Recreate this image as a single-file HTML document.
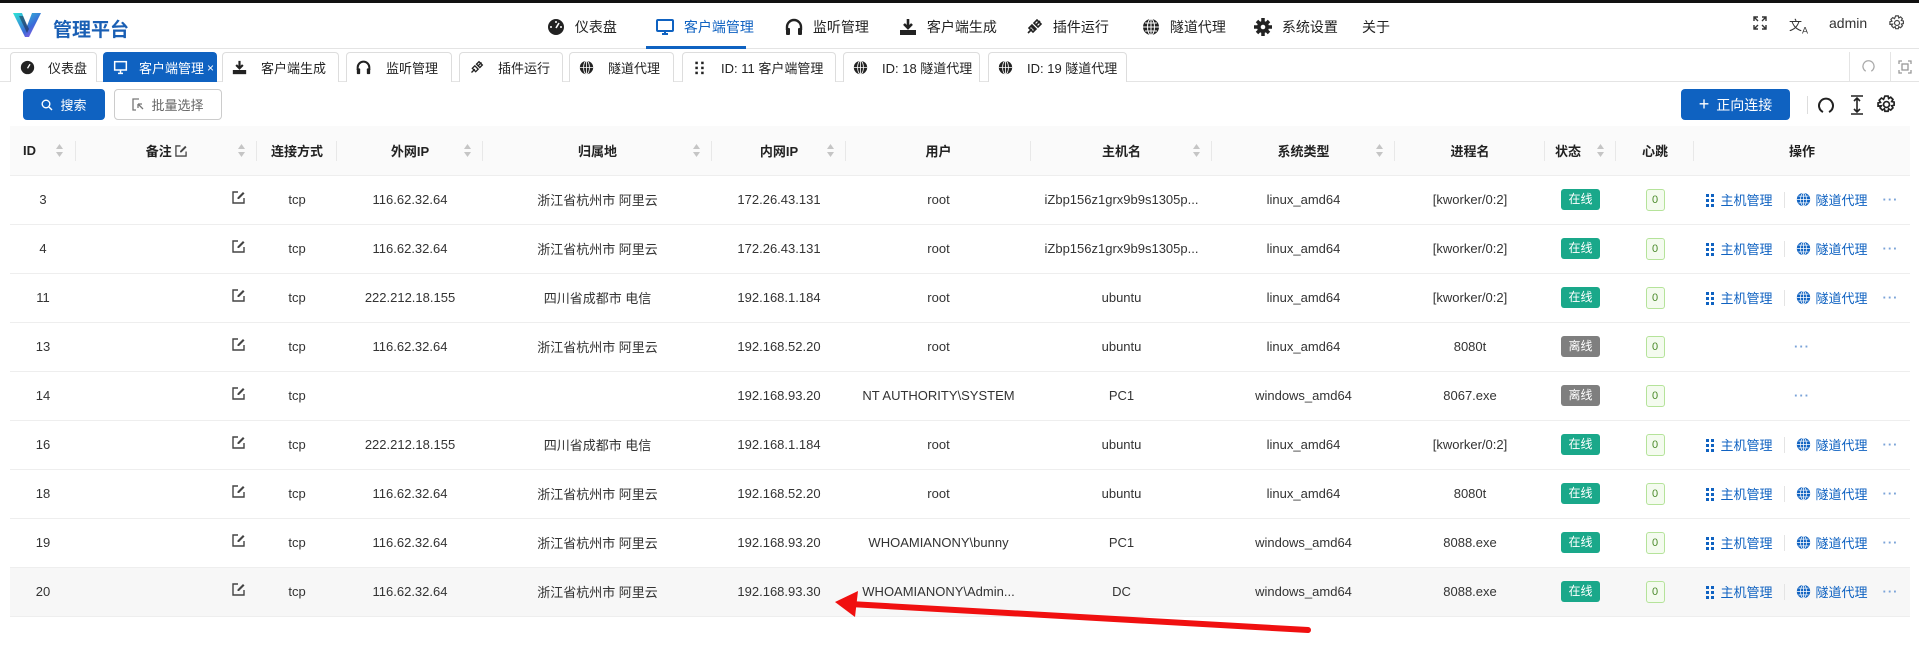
<!DOCTYPE html>
<html><head><meta charset="utf-8"><style>
*{box-sizing:border-box;margin:0;padding:0}
body{width:1919px;height:649px;overflow:hidden;background:#fff;font-family:"Liberation Sans","Noto Sans CJK SC",sans-serif;color:#333;position:relative;font-size:13px}
.abs{position:absolute}
.top{position:absolute;left:0;top:0;width:1919px;height:3px;background:#111}
.hdr{position:absolute;left:0;top:3px;width:1919px;height:46px;border-bottom:1px solid #e4e4e4}
.nav{position:absolute;top:14px;font-size:14px;color:#222;display:flex;align-items:center;gap:6px;white-space:nowrap}
.nav svg{width:18px;height:18px}
.tabs{position:absolute;left:0;top:50px;width:1919px;height:32px;border-bottom:1px solid #e4e4e4}
.tab{position:absolute;top:2px;height:30px;border:1px solid #ddd;border-bottom:none;border-radius:4px 4px 0 0;background:#fff;font-size:13px;color:#222;display:flex;align-items:center;white-space:nowrap}
.tab svg{position:absolute;left:9px;top:7px;width:15px;height:15px}
.tab.on{background:#0f62c1;border-color:#0f62c1;color:#fff}
.btn{position:absolute;top:89px;height:31px;border-radius:4px;font-size:13px;display:flex;align-items:center;justify-content:center;gap:7px}
table{position:absolute;left:10px;top:126px;width:1900px;border-collapse:collapse;table-layout:fixed}
th{height:49px;background:#fafafa;font-weight:bold;font-size:13px;color:#222;position:relative;text-align:center;border-bottom:1px solid #eee}
th .sep{position:absolute;right:0;top:15px;width:1px;height:20px;background:#e8e8e8}
th .so{position:absolute;right:12px;top:18px;width:7px;height:13px}
td{height:49px;text-align:center;border-bottom:1px solid #eee;font-size:13px;color:#333;white-space:nowrap;overflow:hidden;position:relative}
tr.hv td{background:#f7f7f7}
.ed{position:absolute;right:12px;top:15px;width:13px;height:13px}
.bd{display:inline-block;width:39px;height:21px;line-height:21px;border-radius:3px;color:#fff;font-size:12px}
.g{background:#1aa88a}.gr{background:#7f7f7f}
.hb{display:inline-block;width:19px;height:22px;line-height:20px;border:1px solid #b5e39a;background:#f4fbef;border-radius:3px;font-size:11px;color:#4a8a2a}
.op{color:#0f62c1;font-size:13px;display:flex;align-items:center;justify-content:center;gap:5px}
.op .s{width:1px;height:16px;background:#e4e4e4;margin:0 6px}
.dots{color:#7aa3d8;letter-spacing:1px;margin-left:10px;font-weight:bold}
</style></head><body>
<div class="top"></div>
<div class="hdr">
<svg class="abs" style="left:13px;top:10px" width="28" height="24" viewBox="0 0 28 24"><defs><linearGradient id="lg" x1="0" y1="0" x2="1" y2="1"><stop offset="0" stop-color="#2ee6d6"/><stop offset="0.6" stop-color="#3a6bd8"/><stop offset="1" stop-color="#c04fe8"/></linearGradient></defs><path d="M0 0h9l5 13 5-13h9l-12 24h-4z" fill="url(#lg)"/><path d="M6 3l8 17 2-4-6-13z" fill="#1b2a44" opacity=".55"/></svg>
<div class="abs" style="left:53px;top:12px;font-size:19px;font-weight:bold;color:#1a5fb4">管理平台</div>
<div class="nav" style="left:547px"><svg viewBox="0 0 18 18"><circle cx="9" cy="9" r="8" fill="#222"/><path d="M9 10l3-5" stroke="#fff" stroke-width="1.6"/><circle cx="4" cy="9" r="1" fill="#fff"/><circle cx="14" cy="9" r="1" fill="#fff"/><circle cx="9" cy="4" r="1" fill="#fff"/></svg>&nbsp;仪表盘</div>
<div class="nav" style="left:656px;color:#0f62c1"><svg viewBox="0 0 18 18"><rect x="1" y="2" width="16" height="11" rx="1" fill="none" stroke="#0f62c1" stroke-width="2"/><path d="M6 16h6M9 13v3" stroke="#0f62c1" stroke-width="2"/></svg>&nbsp;客户端管理</div>
<div class="abs" style="left:646px;top:43px;width:100px;height:3px;background:#0f62c1"></div>
<div class="nav" style="left:785px"><svg viewBox="0 0 18 18"><path d="M2 12V9a7 7 0 0114 0v3" fill="none" stroke="#222" stroke-width="2.4"/><rect x="1" y="10" width="4" height="7" rx="1" fill="#222"/><rect x="13" y="10" width="4" height="7" rx="1" fill="#222"/></svg>&nbsp;监听管理</div>
<div class="nav" style="left:899px"><svg viewBox="0 0 18 18"><path d="M9 1v9M5 6l4 4 4-4" stroke="#222" stroke-width="2.6" fill="none"/><rect x="1" y="12" width="16" height="5" fill="#222"/></svg>&nbsp;客户端生成</div>
<div class="nav" style="left:1025px"><svg viewBox="0 0 18 18"><path d="M3 15l4-4m4-4l4-4M6 8l4 4m-6-2l4 4 3-3-4-4zm5-5l4 4 3-3-4-4z" stroke="#222" stroke-width="1.6" fill="none"/></svg>&nbsp;插件运行</div>
<div class="nav" style="left:1142px"><svg viewBox="0 0 18 18"><circle cx="9" cy="9" r="8" fill="#222"/><path d="M1 9h16M9 1v16M3 5h12M3 13h12" stroke="#fff" stroke-width="1"/><ellipse cx="9" cy="9" rx="3.5" ry="8" fill="none" stroke="#fff"/></svg>&nbsp;隧道代理</div>
<div class="nav" style="left:1254px"><svg viewBox="0 0 18 18"><circle cx="9" cy="9" r="6" fill="#222"/><path d="M9 0v18M0 9h18M3 3l12 12M15 3L3 15" stroke="#222" stroke-width="3.5"/><circle cx="9" cy="9" r="2.3" fill="#fff"/></svg>&nbsp;系统设置</div>
<div class="nav" style="left:1362px">关于</div>
<svg class="abs" style="left:1753px;top:13px" width="14" height="14" viewBox="0 0 14 14" fill="none" stroke="#333" stroke-width="1.4"><path d="M1 5V1h4M9 1h4v4M13 9v4H9M5 13H1V9M1 1l4 4M13 1L9 5M13 13L9 9M1 13l4-4"/></svg>
<div class="abs" style="left:1789px;top:12px;font-size:13px;color:#333">文<sub style="font-size:9px">A</sub></div>
<div class="abs" style="left:1829px;top:12px;font-size:14px;color:#333">admin</div>
<svg class="abs" style="left:1889px;top:12px" width="16" height="16" viewBox="0 0 18 18" fill="none" stroke="#444" stroke-width="1.3"><circle cx="9" cy="9" r="2.8"/><path d="M7.5 1h3l.5 2.3 2-1.2 2.1 2.1-1.2 2 2.3.5v3l-2.3.5 1.2 2-2.1 2.1-2-1.2-.5 2.3h-3l-.5-2.3-2 1.2-2.1-2.1 1.2-2L1 10.5v-3l2.3-.5-1.2-2 2.1-2.1 2 1.2z"/></svg>
</div>

<div class="tabs">
<div class="tab" style="left:10px;width:87px"><svg viewBox="0 0 18 18"><circle cx="9" cy="9" r="8" fill="#222"/><path d="M9 10l3-5" stroke="#fff" stroke-width="1.6"/></svg><span style="margin-left:37px">仪表盘</span></div>
<div class="tab on" style="left:103px;width:114px"><svg viewBox="0 0 18 18"><rect x="2" y="2" width="14" height="10" fill="none" stroke="#fff" stroke-width="1.8"/><path d="M6 16h6M9 12v4" stroke="#fff" stroke-width="1.8"/></svg><span style="margin-left:35px">客户端管理</span><span style="margin-left:3px;font-size:12px">×</span></div>
<div class="tab" style="left:222px;width:117px"><svg viewBox="0 0 18 18"><path d="M9 1v9M5 6l4 4 4-4" stroke="#222" stroke-width="2.6" fill="none"/><rect x="1" y="12" width="16" height="5" fill="#222"/></svg><span style="margin-left:38px">客户端生成</span></div>
<div class="tab" style="left:346px;width:106px"><svg viewBox="0 0 18 18"><path d="M2 12V9a7 7 0 0114 0v3" fill="none" stroke="#222" stroke-width="2.4"/><rect x="1" y="10" width="4" height="7" rx="1" fill="#222"/><rect x="13" y="10" width="4" height="7" rx="1" fill="#222"/></svg><span style="margin-left:39px">监听管理</span></div>
<div class="tab" style="left:459px;width:104px"><svg viewBox="0 0 18 18"><path d="M3 15l4-4m4-4l4-4M4 10l4 4 3-3-4-4zm5-5l4 4 3-3-4-4z" stroke="#222" stroke-width="1.6" fill="none"/></svg><span style="margin-left:38px">插件运行</span></div>
<div class="tab" style="left:569px;width:105px"><svg viewBox="0 0 18 18"><circle cx="9" cy="9" r="8" fill="#222"/><path d="M1 9h16M9 1v16" stroke="#fff"/><ellipse cx="9" cy="9" rx="3.5" ry="8" fill="none" stroke="#fff"/></svg><span style="margin-left:38px">隧道代理</span></div>
<div class="tab" style="left:682px;width:154px"><svg viewBox="0 0 18 18" fill="#222"><rect x="4" y="2" width="3" height="3"/><rect x="11" y="2" width="3" height="3"/><rect x="4" y="8" width="3" height="3"/><rect x="11" y="8" width="3" height="3"/><rect x="4" y="14" width="3" height="3"/><rect x="11" y="14" width="3" height="3"/></svg><span style="margin-left:38px">ID: 11 客户端管理</span></div>
<div class="tab" style="left:843px;width:137px"><svg viewBox="0 0 18 18"><circle cx="9" cy="9" r="8" fill="#222"/><path d="M1 9h16M9 1v16" stroke="#fff"/><ellipse cx="9" cy="9" rx="3.5" ry="8" fill="none" stroke="#fff"/></svg><span style="margin-left:38px">ID: 18 隧道代理</span></div>
<div class="tab" style="left:988px;width:139px"><svg viewBox="0 0 18 18"><circle cx="9" cy="9" r="8" fill="#222"/><path d="M1 9h16M9 1v16" stroke="#fff"/><ellipse cx="9" cy="9" rx="3.5" ry="8" fill="none" stroke="#fff"/></svg><span style="margin-left:38px">ID: 19 隧道代理</span></div>
<div class="abs" style="left:1849px;top:2px;width:1px;height:30px;background:#e4e4e4"></div>
<div class="abs" style="left:1890px;top:2px;width:1px;height:30px;background:#e4e4e4"></div>
<svg class="abs" style="left:1862px;top:10px" width="13" height="13" viewBox="0 0 14 14" fill="none" stroke="#aaa" stroke-width="1.4"><path d="M4 12A6 6 0 1110 12"/></svg>
<svg class="abs" style="left:1898px;top:10px" width="14" height="14" viewBox="0 0 14 14" fill="none" stroke="#999" stroke-width="1.3"><path d="M1 4V1h3M10 1h3v3M13 10v3h-3M4 13H1v-3"/><rect x="4" y="4" width="6" height="6"/></svg>
</div>

<div class="btn" style="left:23px;width:82px;background:#0f62c1;color:#fff"><svg width="12" height="12" viewBox="0 0 12 12" fill="none" stroke="#fff" stroke-width="1.4"><circle cx="5" cy="5" r="3.8"/><path d="M8 8l3 3"/></svg>搜索</div>
<div class="btn" style="left:114px;width:108px;border:1px solid #ccc;color:#666"><svg width="12" height="13" viewBox="0 0 12 13" fill="none" stroke="#777" stroke-width="1.3"><path d="M7 1H1v11h3M6 6l5 5M6 6v4M6 6h4"/></svg>批量选择</div>
<div class="btn" style="left:1681px;width:109px;background:#0f62c1;color:#fff;font-size:14px"><span style="font-size:18px;font-weight:300">+</span>正向连接</div>
<div class="abs" style="left:1807px;top:96px;width:1px;height:18px;background:#ddd"></div>
<svg class="abs" style="left:1818px;top:96px" width="16" height="18" viewBox="0 0 16 18" fill="none" stroke="#222" stroke-width="2"><path d="M5 16A7 7 0 1111 16"/></svg>
<svg class="abs" style="left:1850px;top:95px" width="14" height="20" viewBox="0 0 14 20" fill="none" stroke="#222" stroke-width="1.6"><path d="M1 1h12M1 19h12M7 3v14M4 6l3-3 3 3M4 14l3 3 3-3"/></svg>
<svg class="abs" style="left:1877px;top:95px" width="19" height="19" viewBox="0 0 18 18" fill="none" stroke="#222" stroke-width="1.6"><circle cx="9" cy="9" r="2.8"/><path d="M7.5 1h3l.5 2.3 2-1.2 2.1 2.1-1.2 2 2.3.5v3l-2.3.5 1.2 2-2.1 2.1-2-1.2-.5 2.3h-3l-.5-2.3-2 1.2-2.1-2.1 1.2-2L1 10.5v-3l2.3-.5-1.2-2 2.1-2.1 2 1.2z"/></svg>

<svg width="0" height="0" style="position:absolute"><defs>
<symbol id="so" viewBox="0 0 7 13"><path d="M3.5 0L7 5H0z" fill="#c5c5c5"/><path d="M3.5 13L7 8H0z" fill="#c5c5c5"/></symbol>
<symbol id="ed" viewBox="0 0 13 13"><path d="M6 1H1v11h11V7" fill="none" stroke="#444" stroke-width="1.4"/><path d="M11 1l1.5 1.5L7 8H5.5V6.5z" fill="#444"/></symbol>
<symbol id="dt" viewBox="0 0 10 14" fill="#0f62c1"><rect x="1" y="1" width="3" height="3"/><rect x="6" y="1" width="3" height="3"/><rect x="1" y="6" width="3" height="3"/><rect x="6" y="6" width="3" height="3"/><rect x="1" y="11" width="3" height="3"/><rect x="6" y="11" width="3" height="3"/></symbol>
<symbol id="gl" viewBox="0 0 18 18"><circle cx="9" cy="9" r="8" fill="#0f62c1"/><path d="M1 9h16M9 1v16M3 5h12M3 13h12" stroke="#fff" stroke-width=".9"/><ellipse cx="9" cy="9" rx="3.5" ry="8" fill="none" stroke="#fff" stroke-width=".9"/></symbol>
</defs></svg>

<table>
<colgroup><col style="width:66px"><col style="width:181px"><col style="width:80px"><col style="width:146px"><col style="width:229px"><col style="width:134px"><col style="width:185px"><col style="width:181px"><col style="width:183px"><col style="width:150px"><col style="width:71px"><col style="width:78px"><col style="width:216px"></colgroup>
<tr>
<th style="text-align:left;padding-left:13px">ID<svg class="so" style="right:13px"><use href="#so"/></svg><span class="sep"></span></th>
<th>备注 <svg width="12" height="12" style="vertical-align:-1px"><use href="#ed"/></svg><svg class="so"><use href="#so"/></svg><span class="sep"></span></th>
<th>连接方式<span class="sep"></span></th>
<th>外网IP<svg class="so"><use href="#so"/></svg><span class="sep"></span></th>
<th>归属地<svg class="so"><use href="#so"/></svg><span class="sep"></span></th>
<th>内网IP<svg class="so"><use href="#so"/></svg><span class="sep"></span></th>
<th>用户<span class="sep"></span></th>
<th>主机名<svg class="so"><use href="#so"/></svg><span class="sep"></span></th>
<th>系统类型<svg class="so"><use href="#so"/></svg><span class="sep"></span></th>
<th>进程名<span class="sep"></span></th>
<th style="text-align:left;padding-left:10px">状态<svg class="so" style="right:12px"><use href="#so"/></svg><span class="sep"></span></th>
<th>心跳<span class="sep"></span></th>
<th>操作</th>
</tr>
<tr><td>3</td><td><svg class="ed"><use href="#ed"/></svg></td><td>tcp</td><td>116.62.32.64</td><td>浙江省杭州市 阿里云</td><td>172.26.43.131</td><td>root</td><td>iZbp156z1grx9b9s1305p...</td><td>linux_amd64</td><td>[kworker/0:2]</td><td><span class="bd g">在线</span></td><td><span class="hb">0</span></td><td><div class="op"><svg width="10" height="14"><use href="#dt"/></svg>主机管理<span class="s"></span><svg width="15" height="15"><use href="#gl"/></svg>隧道代理<span class="dots">···</span></div></td></tr>
<tr><td>4</td><td><svg class="ed"><use href="#ed"/></svg></td><td>tcp</td><td>116.62.32.64</td><td>浙江省杭州市 阿里云</td><td>172.26.43.131</td><td>root</td><td>iZbp156z1grx9b9s1305p...</td><td>linux_amd64</td><td>[kworker/0:2]</td><td><span class="bd g">在线</span></td><td><span class="hb">0</span></td><td><div class="op"><svg width="10" height="14"><use href="#dt"/></svg>主机管理<span class="s"></span><svg width="15" height="15"><use href="#gl"/></svg>隧道代理<span class="dots">···</span></div></td></tr>
<tr><td>11</td><td><svg class="ed"><use href="#ed"/></svg></td><td>tcp</td><td>222.212.18.155</td><td>四川省成都市 电信</td><td>192.168.1.184</td><td>root</td><td>ubuntu</td><td>linux_amd64</td><td>[kworker/0:2]</td><td><span class="bd g">在线</span></td><td><span class="hb">0</span></td><td><div class="op"><svg width="10" height="14"><use href="#dt"/></svg>主机管理<span class="s"></span><svg width="15" height="15"><use href="#gl"/></svg>隧道代理<span class="dots">···</span></div></td></tr>
<tr><td>13</td><td><svg class="ed"><use href="#ed"/></svg></td><td>tcp</td><td>116.62.32.64</td><td>浙江省杭州市 阿里云</td><td>192.168.52.20</td><td>root</td><td>ubuntu</td><td>linux_amd64</td><td>8080t</td><td><span class="bd gr">离线</span></td><td><span class="hb">0</span></td><td><div class="op"><span class="dots" style="margin:0">···</span></div></td></tr>
<tr><td>14</td><td><svg class="ed"><use href="#ed"/></svg></td><td>tcp</td><td></td><td></td><td>192.168.93.20</td><td>NT AUTHORITY\SYSTEM</td><td>PC1</td><td>windows_amd64</td><td>8067.exe</td><td><span class="bd gr">离线</span></td><td><span class="hb">0</span></td><td><div class="op"><span class="dots" style="margin:0">···</span></div></td></tr>
<tr><td>16</td><td><svg class="ed"><use href="#ed"/></svg></td><td>tcp</td><td>222.212.18.155</td><td>四川省成都市 电信</td><td>192.168.1.184</td><td>root</td><td>ubuntu</td><td>linux_amd64</td><td>[kworker/0:2]</td><td><span class="bd g">在线</span></td><td><span class="hb">0</span></td><td><div class="op"><svg width="10" height="14"><use href="#dt"/></svg>主机管理<span class="s"></span><svg width="15" height="15"><use href="#gl"/></svg>隧道代理<span class="dots">···</span></div></td></tr>
<tr><td>18</td><td><svg class="ed"><use href="#ed"/></svg></td><td>tcp</td><td>116.62.32.64</td><td>浙江省杭州市 阿里云</td><td>192.168.52.20</td><td>root</td><td>ubuntu</td><td>linux_amd64</td><td>8080t</td><td><span class="bd g">在线</span></td><td><span class="hb">0</span></td><td><div class="op"><svg width="10" height="14"><use href="#dt"/></svg>主机管理<span class="s"></span><svg width="15" height="15"><use href="#gl"/></svg>隧道代理<span class="dots">···</span></div></td></tr>
<tr><td>19</td><td><svg class="ed"><use href="#ed"/></svg></td><td>tcp</td><td>116.62.32.64</td><td>浙江省杭州市 阿里云</td><td>192.168.93.20</td><td>WHOAMIANONY\bunny</td><td>PC1</td><td>windows_amd64</td><td>8088.exe</td><td><span class="bd g">在线</span></td><td><span class="hb">0</span></td><td><div class="op"><svg width="10" height="14"><use href="#dt"/></svg>主机管理<span class="s"></span><svg width="15" height="15"><use href="#gl"/></svg>隧道代理<span class="dots">···</span></div></td></tr>
<tr class="hv"><td>20</td><td><svg class="ed"><use href="#ed"/></svg></td><td>tcp</td><td>116.62.32.64</td><td>浙江省杭州市 阿里云</td><td>192.168.93.30</td><td>WHOAMIANONY\Admin...</td><td>DC</td><td>windows_amd64</td><td>8088.exe</td><td><span class="bd g">在线</span></td><td><span class="hb">0</span></td><td><div class="op"><svg width="10" height="14"><use href="#dt"/></svg>主机管理<span class="s"></span><svg width="15" height="15"><use href="#gl"/></svg>隧道代理<span class="dots">···</span></div></td></tr>
</table>

<svg class="abs" style="left:0;top:0" width="1919" height="649"><path d="M1308 630L850 604" stroke="#f01010" stroke-width="6" stroke-linecap="round"/><path d="M835 602L858 591 855 617z" fill="#f01010"/></svg>
</body></html>
